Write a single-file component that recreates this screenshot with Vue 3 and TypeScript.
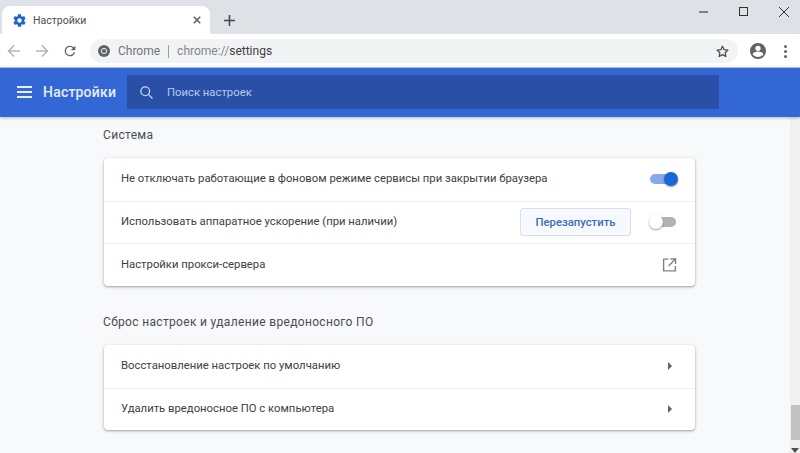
<script setup lang="ts">
const systemRows = [
  { id: "bg", label: "Не отключать работающие в фоновом режиме сервисы при закрытии браузера" },
  { id: "gpu", label: "Использовать аппаратное ускорение (при наличии)" },
  { id: "proxy", label: "Настройки прокси-сервера" },
];
const resetRows = [
  "Восстановление настроек по умолчанию",
  "Удалить вредоносное ПО с компьютера",
];
</script>

<template>
  <div class="browser">
    <div class="tabstrip">
      <div class="tab">
        <svg class="tab-icon" width="15" height="15" viewBox="0 0 24 24">
          <path fill="#1a67c9" d="M19.4 13c.04-.32.07-.66.07-1s-.03-.68-.07-1l2.1-1.65c.2-.15.25-.42.12-.64l-2-3.46c-.12-.22-.39-.3-.61-.22l-2.49 1c-.52-.4-1.08-.73-1.69-.98l-.38-2.65A.49.49 0 0 0 14 2h-4c-.25 0-.46.18-.49.42l-.38 2.65c-.61.25-1.17.59-1.69.98l-2.49-1c-.23-.09-.49 0-.61.22l-2 3.46c-.13.22-.07.49.12.64L4.57 11c-.04.32-.07.66-.07 1s.03.68.07 1l-2.11 1.65c-.19.15-.25.42-.12.64l2 3.46c.12.22.39.3.61.22l2.49-1c.52.4 1.08.73 1.69.98l.38 2.65c.03.24.24.42.49.42h4c.25 0 .46-.18.49-.42l.38-2.65c.61-.25 1.17-.59 1.69-.98l2.49 1c.23.09.49 0 .61-.22l2-3.46c.12-.22.07-.49-.12-.64L19.4 13zM12 15.5a3.5 3.5 0 1 1 0-7 3.5 3.5 0 0 1 0 7z" />
        </svg>
        <span class="tab-title">Настройки</span>
        <svg class="tab-close" width="8" height="8" viewBox="0 0 10 10">
          <path d="M1 1l8 8M9 1l-8 8" stroke="#5f6368" stroke-width="2" fill="none" />
        </svg>
      </div>
      <svg class="new-tab" width="11" height="11" viewBox="0 0 12 12">
        <path d="M6 0v12M0 6h12" stroke="#45484c" stroke-width="1.700" />
      </svg>
      <div class="window-btns">
        <svg width="9" height="10" viewBox="0 0 9 10"><path d="M0 5h9" stroke="#333" stroke-width="1.100" /></svg>
        <svg width="9" height="10" viewBox="0 0 9 10"><rect x=".5" y=".5" width="8" height="8" fill="none" stroke="#333" /></svg>
        <svg width="10" height="10" viewBox="0 0 10 10"><path d="M0 0l10 10M10 0L0 10" stroke="#333" stroke-width="1" /></svg>
      </div>
    </div>

    <div class="toolbar">
      <svg class="nav" width="16" height="16" viewBox="0 0 16 16">
        <path d="M14 8H2.500M8 2.500L2.500 8 8 13.500" fill="none" stroke="#b4b7ba" stroke-width="1.600" />
      </svg>
      <svg class="nav" width="16" height="16" viewBox="0 0 16 16">
        <path d="M2 8h11.500M8 2.500L13.500 8 8 13.500" fill="none" stroke="#b4b7ba" stroke-width="1.600" />
      </svg>
      <svg class="nav" width="16" height="16" viewBox="0 0 24 24">
        <path fill="#5f6368" d="M17.650 6.350A7.960 7.960 0 0 0 12 4a8 8 0 1 0 7.730 10h-2.080A6 6 0 1 1 12 6c1.660 0 3.140.690 4.220 1.780L13 11h7V4l-2.350 2.350z" />
      </svg>
      <div class="omnibox">
        <svg width="12" height="12" viewBox="0 0 12 12">
          <circle cx="6" cy="6" r="6" fill="#5f6368" />
          <circle cx="6" cy="6" r="2.600" fill="#5f6368" stroke="#f1f3f4" stroke-width="1" />
        </svg>
        <span class="origin">Chrome</span>
        <span class="divider"></span>
        <span class="url"><span class="scheme">chrome://</span>settings</span>
        <svg class="star" width="15" height="15" viewBox="0 0 24 24">
          <path fill="none" stroke="#45484c" stroke-width="2" stroke-linejoin="round" d="M12 3.500l2.600 5.600 6.100.7-4.500 4.200 1.200 6L12 17l-5.400 3 1.200-6-4.500-4.200 6.100-.7z" />
        </svg>
      </div>
      <svg class="avatar" width="16" height="16" viewBox="0 0 24 24">
        <path fill="#5f6368" d="M12 0a12 12 0 1 0 0 24 12 12 0 0 0 0-24zm0 4a4 4 0 1 1 0 8 4 4 0 0 1 0-8zm0 17c-3.300 0-6.200-1.600-8-4.100.1-2.600 5.300-4 8-4s7.900 1.400 8 4c-1.800 2.500-4.700 4.100-8 4.100z" />
      </svg>
      <div class="kebab"><i></i><i></i><i></i></div>
    </div>

    <header class="settings-bar">
      <div class="bar-left">
        <div class="burger"><i></i><i></i><i></i></div>
        <span class="bar-title">Настройки</span>
      </div>
      <div class="search">
        <svg width="15" height="15" viewBox="0 0 24 24">
          <path fill="none" stroke="#c3d3f2" stroke-width="2.200" d="M10 3a7 7 0 1 1 0 14 7 7 0 0 1 0-14zM15 15l6.500 6.500" />
        </svg>
        <span>Поиск настроек</span>
      </div>
    </header>

    <div class="body">
      <main class="content">
        <h2 class="section-title first">Система</h2>
        <section class="card">
          <div v-for="row in systemRows" :key="row.id" class="row">
            <span class="row-label">{{ row.label }}</span>
            <span v-if="row.id === 'bg'" class="toggle on"><i></i></span>
            <template v-else-if="row.id === 'gpu'">
              <button class="restart">Перезапустить</button>
              <span class="toggle"><i></i></span>
            </template>
            <svg v-else class="ext" width="15" height="14" viewBox="0 0 15 15">
              <path fill="none" stroke="#808386" stroke-width="1.500" d="M6.500 1.200H1.200v12.600h12.600V8.500M8.500 1H14v5.500M14 1L6.500 8.500" />
            </svg>
          </div>
        </section>
        <h2 class="section-title second">Сброс настроек и удаление вредоносного ПО</h2>
        <section class="card">
          <div v-for="label in resetRows" :key="label" class="row">
            <span class="row-label">{{ label }}</span>
            <span class="arrow"></span>
          </div>
        </section>
      </main>
      <div class="scrollbar">
        <span class="scroll-thumb"></span>
        <span class="scroll-down"></span>
      </div>
    </div>
  </div>
</template>

<style>
html,
body {
  margin: 0;
  overflow: hidden;
}
</style>

<style scoped>
.browser {
  width: 800px;
  height: 453px;
  display: flex;
  flex-direction: column;
  overflow: hidden;
  font-family: Roboto, "Noto Sans", sans-serif;
  background: #f8f9fa;
  color: #3c4043;
}
.tabstrip {
  height: 34px;
  flex: none;
  display: flex;
  align-items: flex-start;
  padding: 6px 0 0 2px;
  box-sizing: border-box;
  background: #dee1e6;
}
.tab {
  width: 208px;
  height: 28px;
  display: flex;
  align-items: center;
  padding: 0 8px 0 10px;
  box-sizing: border-box;
  background: #fff;
  border-radius: 8px 8px 0 0;
}
.tab-title {
  margin-left: 6px;
  flex: 1;
  font-size: 10.500px;
  color: #4a4d51;
}
.tab-close {
  margin-right: 1px;
}
.new-tab {
  margin: 9px 0 0 14px;
}
.window-btns {
  margin-left: auto;
  margin-top: 1px;
  padding-right: 11px;
  display: flex;
  gap: 31px;
}
.toolbar {
  height: 33px;
  flex: none;
  display: flex;
  align-items: center;
  padding: 1px 0 0 6px;
  box-sizing: border-box;
  background: #fff;
}
.nav {
  margin-right: 12px;
}
.omnibox {
  width: 648px;
  height: 24px;
  display: flex;
  align-items: center;
  padding: 0 8px 0 8px;
  box-sizing: border-box;
  background: #f1f3f4;
  border-radius: 12px;
  font-size: 12px;
}
.origin {
  margin-left: 8px;
  color: #70757a;
}
.divider {
  width: 1px;
  height: 13px;
  margin: 0 8px;
  background: #9aa0a6;
}
.scheme {
  color: #80868b;
}
.url {
  flex: 1;
  color: #3c4043;
}
.avatar {
  margin-left: 12px;
}
.kebab {
  margin-left: 18px;
  display: flex;
  flex-direction: column;
  gap: 2px;
}
.kebab i {
  width: 3px;
  height: 3px;
  border-radius: 50%;
  background: #5f6368;
}
.settings-bar {
  height: 50px;
  flex: none;
  display: flex;
  align-items: center;
  padding-bottom: 1px;
  background: #3367d6;
  border-top: 1px solid #aabbdd;
  box-sizing: border-box;
  box-shadow: 0 1px 3px rgba(60, 64, 67, 0.35);
  position: relative;
}
.bar-left {
  width: 127px;
  display: flex;
  align-items: center;
  padding-left: 17px;
  box-sizing: border-box;
}
.burger {
  display: flex;
  flex-direction: column;
  gap: 3px;
}
.burger i {
  width: 15px;
  height: 2px;
  background: #e8eefa;
}
.bar-title {
  margin-left: 11px;
  font-size: 14px;
  font-weight: 500;
  letter-spacing: 0.2px;
  color: #e8eefa;
}
.search {
  width: 592px;
  height: 34px;
  display: flex;
  align-items: center;
  padding-left: 12px;
  box-sizing: border-box;
  background: #2a4fa6;
  font-size: 11.300px;
  color: #b9c9ec;
}
.search span {
  margin-left: 13px;
}
.body {
  flex: 1;
  display: flex;
  min-height: 0;
}
.content {
  flex: 1;
  padding: 0 0 0 104px;
  min-width: 0;
}
.section-title {
  margin: 0 0 0 -1px;
  font-size: 12px;
  font-weight: 400;
  color: #4a4d51;
  letter-spacing: 0.33px;
  line-height: 14px;
}
.section-title.first {
  margin-top: 11px;
  margin-bottom: 16px;
}
.section-title.second {
  margin-top: 29px;
  margin-bottom: 16px;
}
.card {
  width: 591px;
  background: #fff;
  border-radius: 4px;
  box-shadow: 0 1px 2px rgba(60, 64, 67, 0.35), 0 1px 3px 1px rgba(60, 64, 67, 0.12);
}
.row {
  height: 42.670px;
  display: flex;
  align-items: center;
  padding: 0 18px 0 17px;
  box-sizing: border-box;
  border-top: 1px solid #eceef0;
  font-size: 11.300px;
}
.row:first-child {
  border-top: 0;
}
.row-label {
  flex: 1;
  padding-bottom: 1px;
  color: #3c4043;
}
.toggle {
  width: 26px;
  height: 10px;
  margin-right: 1px;
  position: relative;
  border-radius: 5px;
  background: #b0b2b5;
}
.toggle i {
  position: absolute;
  left: -1px;
  top: -2px;
  width: 14px;
  height: 14px;
  border-radius: 50%;
  background: #fff;
  box-shadow: 0 1px 2px rgba(0, 0, 0, 0.4);
}
.toggle.on {
  background: #87a9e8;
}
.toggle.on i {
  left: auto;
  right: -2px;
  background: #1a67d6;
}
.restart {
  width: 111px;
  height: 28px;
  margin-right: 19px;
  padding: 0;
  background: #f6f9fe;
  border: 1px solid #d8dfe8;
  border-radius: 3px;
  font: 500 11.300px Roboto, sans-serif;
  color: #3f6bb5;
}
.arrow {
  width: 0;
  height: 0;
  margin-right: 5px;
  border-left: 4px solid #5f6368;
  border-top: 4px solid transparent;
  border-bottom: 4px solid transparent;
}
.scrollbar {
  width: 10px;
  flex: none;
  display: flex;
  flex-direction: column;
  align-items: center;
  justify-content: flex-end;
  background: #f1f1f1;
}
.scroll-thumb {
  width: 9px;
  height: 35px;
  margin-bottom: 8px;
  margin-left: 1px;
  background: #c1c1c1;
}
.scroll-down {
  width: 0;
  height: 0;
  border-top: 5px solid #505050;
  border-left: 4px solid transparent;
  border-right: 4px solid transparent;
}
</style>
